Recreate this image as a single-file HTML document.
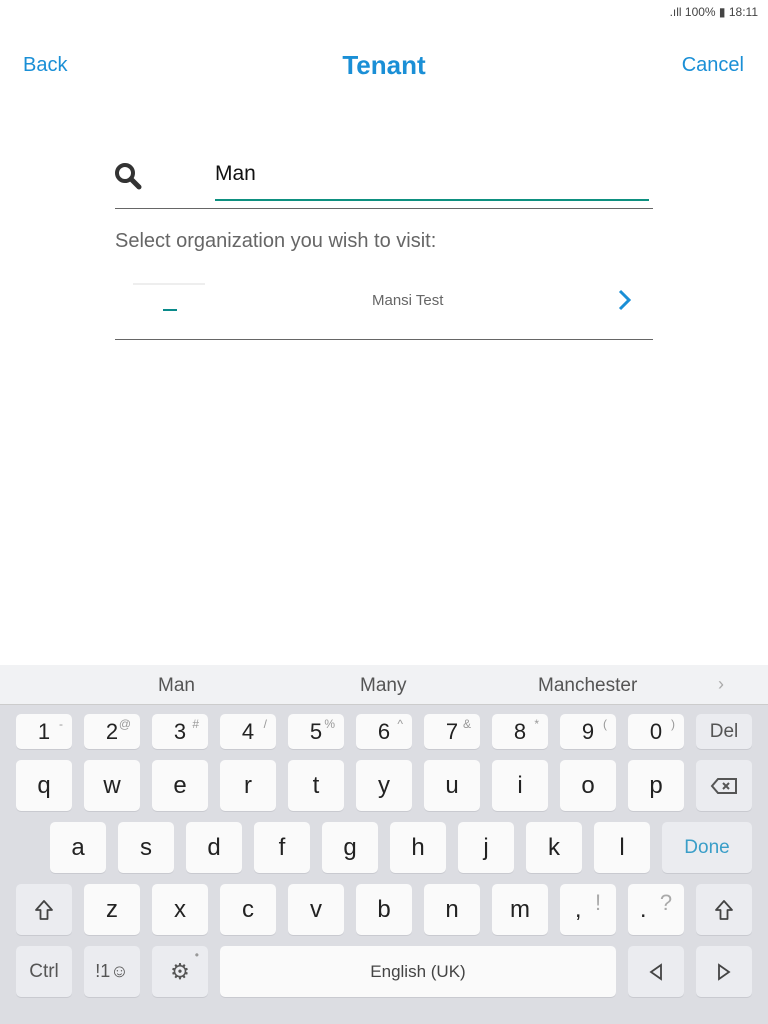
<!DOCTYPE html>
<html><head><meta charset="utf-8"><style>
*{margin:0;padding:0;box-sizing:border-box}
body{width:768px;height:1024px;position:relative;background:#fff;font-family:"Liberation Sans",Roboto,sans-serif;overflow:hidden}
.a{position:absolute}
.k{position:absolute;width:56px;height:51px;background:#fafafa;border-radius:5px;box-shadow:0 1px 0 #c9cad0;color:#222;font-size:24px;display:flex;align-items:center;justify-content:center}
.n{height:35px;font-size:22px}
.f{background:#ebecf0;color:#555}
.s{position:absolute;font-size:12px;color:#999;top:3px;right:9px}
.kb{position:absolute;left:0;top:705px;width:768px;height:319px;background:#dcdde2}
</style></head><body>
<div class="a" style="right:10px;top:5px;font-size:12px;color:#444">.ıll 100% ▮ 18:11</div>
<div class="a" style="left:23px;top:54px;font-size:20px;color:#1a8fd6">Back</div>
<div class="a" style="left:0;width:768px;text-align:center;top:50px;font-size:26px;font-weight:bold;color:#1a8fd6">Tenant</div>
<div class="a" style="right:24px;top:54px;font-size:20px;color:#1a8fd6">Cancel</div>
<svg class="a" style="left:114px;top:162px" width="28" height="28" viewBox="0 0 28 28"><circle cx="11" cy="11" r="8" fill="none" stroke="#333" stroke-width="4"/><path d="M17 17 L25 25" stroke="#333" stroke-width="5" stroke-linecap="round"/></svg>
<div class="a" style="left:215px;top:162px;font-size:21px;color:#111">Man</div>
<div class="a" style="left:215px;top:199px;width:434px;height:2px;background:#0e9080"></div>
<div class="a" style="left:115px;top:208px;width:538px;height:1px;background:#666"></div>
<div class="a" style="left:115px;top:230px;font-size:20px;color:#666">Select organization you wish to visit:</div>
<div class="a" style="left:133px;top:283px;width:72px;height:2px;background:#eee"></div>
<div class="a" style="left:163px;top:309px;width:14px;height:2px;background:#0a8a8a"></div>
<div class="a" style="left:372px;top:292px;font-size:15px;color:#666">Mansi Test</div>
<svg class="a" style="left:616px;top:288px" width="18" height="24" viewBox="0 0 18 24"><path d="M4 3 L13 12 L4 21" fill="none" stroke="#1a8fd6" stroke-width="3"/></svg>
<div class="a" style="left:115px;top:339px;width:538px;height:1px;background:#666"></div>

<div class="a" style="left:0;top:665px;width:768px;height:40px;background:#f1f2f4;border-bottom:1px solid #ccc"></div>
<div class="a" style="left:158px;top:675px;font-size:19px;color:#555">Man</div>
<div class="a" style="left:360px;top:675px;font-size:19px;color:#555">Many</div>
<div class="a" style="left:538px;top:675px;font-size:19px;color:#555">Manchester</div>
<div class="a" style="left:718px;top:674px;font-size:18px;color:#aaa">›</div>
<div class="kb"></div>

<div class="k n" style="left:16px;top:714px">1<span class="s">-</span></div>
<div class="k n" style="left:84px;top:714px">2<span class="s">@</span></div>
<div class="k n" style="left:152px;top:714px">3<span class="s">#</span></div>
<div class="k n" style="left:220px;top:714px">4<span class="s">/</span></div>
<div class="k n" style="left:288px;top:714px">5<span class="s">%</span></div>
<div class="k n" style="left:356px;top:714px">6<span class="s">^</span></div>
<div class="k n" style="left:424px;top:714px">7<span class="s">&amp;</span></div>
<div class="k n" style="left:492px;top:714px">8<span class="s">*</span></div>
<div class="k n" style="left:560px;top:714px">9<span class="s">(</span></div>
<div class="k n" style="left:628px;top:714px">0<span class="s">)</span></div>
<div class="k n f" style="left:696px;top:714px;font-size:19px">Del</div>

<div class="k" style="left:16px;top:760px">q</div>
<div class="k" style="left:84px;top:760px">w</div>
<div class="k" style="left:152px;top:760px">e</div>
<div class="k" style="left:220px;top:760px">r</div>
<div class="k" style="left:288px;top:760px">t</div>
<div class="k" style="left:356px;top:760px">y</div>
<div class="k" style="left:424px;top:760px">u</div>
<div class="k" style="left:492px;top:760px">i</div>
<div class="k" style="left:560px;top:760px">o</div>
<div class="k" style="left:628px;top:760px">p</div>
<div class="k f" style="left:696px;top:760px"><svg width="28" height="18" viewBox="0 0 28 18"><path d="M8 2 H26 V16 H8 L2 9 Z" fill="none" stroke="#555" stroke-width="2"/><path d="M13 6 L19 12 M19 6 L13 12" stroke="#555" stroke-width="2"/></svg></div>

<div class="k" style="left:50px;top:822px">a</div>
<div class="k" style="left:118px;top:822px">s</div>
<div class="k" style="left:186px;top:822px">d</div>
<div class="k" style="left:254px;top:822px">f</div>
<div class="k" style="left:322px;top:822px">g</div>
<div class="k" style="left:390px;top:822px">h</div>
<div class="k" style="left:458px;top:822px">j</div>
<div class="k" style="left:526px;top:822px">k</div>
<div class="k" style="left:594px;top:822px">l</div>
<div class="k f" style="left:662px;top:822px;width:90px;color:#3a9ec8;font-size:19px">Done</div>

<div class="k f" style="left:16px;top:884px"><svg width="20" height="22" viewBox="0 0 20 22"><path d="M10 2 L18 11 H13.5 V20 H6.5 V11 H2 Z" fill="none" stroke="#444" stroke-width="1.8" stroke-linejoin="round"/></svg></div>
<div class="k" style="left:84px;top:884px">z</div>
<div class="k" style="left:152px;top:884px">x</div>
<div class="k" style="left:220px;top:884px">c</div>
<div class="k" style="left:288px;top:884px">v</div>
<div class="k" style="left:356px;top:884px">b</div>
<div class="k" style="left:424px;top:884px">n</div>
<div class="k" style="left:492px;top:884px">m</div>
<div class="k" style="left:560px;top:884px">,&nbsp;&nbsp;<span style="color:#aaa;font-size:22px;margin-top:-14px">!</span></div>
<div class="k" style="left:628px;top:884px">.&nbsp;&nbsp;<span style="color:#aaa;font-size:22px;margin-top:-14px">?</span></div>
<div class="k f" style="left:696px;top:884px"><svg width="20" height="22" viewBox="0 0 20 22"><path d="M10 2 L18 11 H13.5 V20 H6.5 V11 H2 Z" fill="none" stroke="#444" stroke-width="1.8" stroke-linejoin="round"/></svg></div>

<div class="k f" style="left:16px;top:946px;font-size:19px">Ctrl</div>
<div class="k f" style="left:84px;top:946px;font-size:18px">!1☺</div>
<div class="k f" style="left:152px;top:946px;font-size:22px">⚙<span class="s" style="top:2px">•</span></div>
<div class="k" style="left:220px;top:946px;width:396px;font-size:17px;color:#444">English (UK)</div>
<div class="k f" style="left:628px;top:946px"><svg width="14" height="18" viewBox="0 0 14 18"><path d="M12 2 L2 9 L12 16 Z" fill="none" stroke="#444" stroke-width="1.8"/></svg></div>
<div class="k f" style="left:696px;top:946px"><svg width="14" height="18" viewBox="0 0 14 18"><path d="M2 2 L12 9 L2 16 Z" fill="none" stroke="#444" stroke-width="1.8"/></svg></div>
</body></html>
